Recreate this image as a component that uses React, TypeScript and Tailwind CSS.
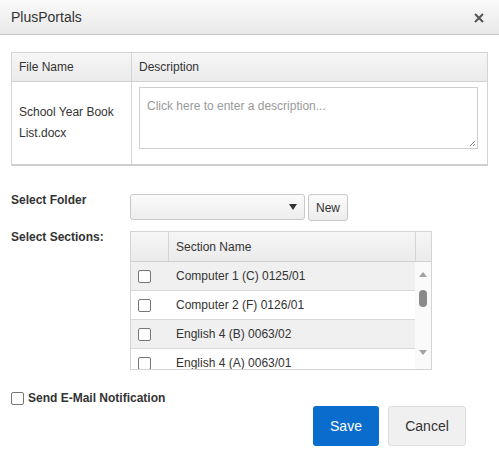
const sections = [
  { name: 'Computer 1 (C) 0125/01', alt: true },
  { name: 'Computer 2 (F) 0126/01', alt: false },
  { name: 'English 4 (B) 0063/02', alt: true },
  { name: 'English 4 (A) 0063/01', alt: false },
];

function Checkbox() {
  return <span className="block w-[13px] h-[13px] rounded-[2px] border border-[#767676] bg-white" />;
}

export default function App() {
  return (
    <div className="w-[499px] h-[457px] bg-white text-[#333] font-['Liberation_Sans',Arial,sans-serif] text-[12px] leading-[14px] overflow-hidden">
      {/* title bar */}
      <div className="h-[35px] flex items-center justify-between pl-[11px] pr-[15px] bg-gradient-to-b from-[#fafafa] to-[#e9e9e9] border-b border-[#c8c8c8]">
        <span className="text-[14px] leading-[16px] text-[#333]">PlusPortals</span>
        <svg width="10" height="10" viewBox="0 0 10 10" className="mt-[1px]">
          <path d="M1 1 L9 9 M9 1 L1 9" stroke="#555" strokeWidth="2" />
        </svg>
      </div>

      {/* file table */}
      <div className="mt-[17px] ml-[11px] w-[477px] border border-[#d4d4d4] border-b-2 border-b-[#cfcfcf]">
        <div className="flex h-[29px] bg-gradient-to-b from-[#f6f6f6] to-[#ebebeb] border-b border-[#d0d0d0]">
          <div className="w-[120px] border-r border-[#d4d4d4] flex items-center pl-[7px]">File Name</div>
          <div className="flex-1 flex items-center pl-[7px]">Description</div>
        </div>
        <div className="flex h-[82px]">
          <div className="w-[120px] border-r border-[#d4d4d4] flex items-center pl-[7px] leading-[21px]">
            School Year Book<br />List.docx
          </div>
          <div className="flex-1 pl-[7px] pr-[9px] pt-[5px]">
            <div className="relative h-[62px] border border-[#cfcfcf] pl-[7px] pt-[11px] text-[#999]">
              Click here to enter a description...
              <svg width="7" height="7" viewBox="0 0 7 7" className="absolute right-[1px] bottom-[1px]">
                <path d="M6 1 L1 6 M6 4 L4 6" stroke="#888" strokeWidth="1" />
              </svg>
            </div>
          </div>
        </div>
      </div>

      {/* folder */}
      <div className="mt-[28px] flex">
        <div className="w-[130px] pl-[11px] -mt-[1px] font-bold text-[#333]">Select Folder</div>
        <div className="flex gap-[3px]">
          <div className="w-[175px] h-[26px] rounded-[3px] border border-[#c8c8c8] bg-gradient-to-b from-[#fbfbfb] to-[#ededed] flex items-center justify-end pr-[7px]">
            <svg width="8" height="6" viewBox="0 0 8 6"><path d="M0 0 H8 L4 6 Z" fill="#333" /></svg>
          </div>
          <div className="w-[40px] h-[27px] rounded-[3px] border border-[#c8c8c8] bg-gradient-to-b from-[#fbfbfb] to-[#ededed] flex items-center justify-center text-[#333]">
            New
          </div>
        </div>
      </div>

      {/* sections */}
      <div className="mt-[10px] flex">
        <div className="w-[130px] pl-[11px] -mt-[1px] font-bold text-[#333]">Select Sections:</div>
        <div className="w-[302px] h-[139px] border border-[#d4d4d4] flex flex-col overflow-hidden">
          <div className="flex h-[30px] shrink-0 bg-gradient-to-b from-[#f6f6f6] to-[#ebebeb] border-b border-[#d0d0d0]">
            <div className="w-[38px] border-r border-[#d4d4d4]" />
            <div className="flex-1 flex items-center pl-[7px]">Section Name</div>
            <div className="w-[16px] border-l border-[#d4d4d4]" />
          </div>
          <div className="flex flex-1 min-h-0">
            <div className="flex-1 flex flex-col">
              {sections.map((s) => (
                <div
                  key={s.name}
                  className={`flex h-[29px] shrink-0 border-b border-[#d8d8d8] ${s.alt ? 'bg-[#f0f0f0]' : 'bg-white'}`}
                >
                  <div className="w-[38px] flex items-center pl-[7px]">
                    <Checkbox />
                  </div>
                  <div className="flex-1 flex items-center pl-[7px]">{s.name}</div>
                </div>
              ))}
            </div>
            <div className="w-[16px] bg-[#fafafa] relative">
              <svg width="8" height="5" viewBox="0 0 8 5" className="absolute left-[4px] top-[10px]">
                <path d="M0 5 H8 L4 0 Z" fill="#a3a3a3" />
              </svg>
              <div className="absolute left-[4px] top-[28px] w-[8px] h-[17px] rounded-full bg-[#8a8a8a]" />
              <svg width="8" height="5" viewBox="0 0 8 5" className="absolute left-[4px] bottom-[14px]">
                <path d="M0 0 H8 L4 5 Z" fill="#a3a3a3" />
              </svg>
            </div>
          </div>
        </div>
      </div>

      {/* footer */}
      <div className="mt-[21px] flex items-center pl-[11px] gap-[4px] font-bold text-[#333]">
        <Checkbox />
        <span>Send E-Mail Notification</span>
      </div>
      <div className="mt-[1px] flex justify-end gap-[9px] pr-[33px]">
        <button className="w-[66px] h-[40px] rounded-[3px] bg-[#0a6ccc] text-white text-[14px]">Save</button>
        <button className="w-[78px] h-[40px] rounded-[3px] bg-[#f0f0f0] border border-[#dedede] text-[#333] text-[14px]">Cancel</button>
      </div>
    </div>
  );
}
